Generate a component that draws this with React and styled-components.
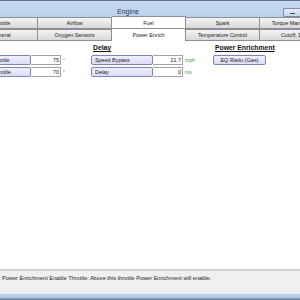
import React from 'react'
import styled, { createGlobalStyle } from 'styled-components'

const Global = createGlobalStyle`
  html, body { margin: 0; padding: 0; }
  body {
    width: 300px;
    height: 300px;
    overflow: hidden;
    font-family: "Liberation Sans", Arial, sans-serif;
    background: #ffffff;
  }
`;

const Window = styled.div`
  width: 300px;
  height: 300px;
  display: flex;
  flex-direction: column;
  overflow: hidden;
  background: #ffffff;
`;

const TitleBar = styled.div`
  height: 16px;
  flex: none;
  display: flex;
  align-items: center;
  border-top: 1px solid #5d7391;
  background: linear-gradient(#c9dcf1, #b9d1ea);
  padding-left: 117px;
`;

const Title = styled.span`
  font-size: 7px;
  color: #1e395b;
  margin-top: 4px;
`;

const MinButton = styled.div`
  margin-left: auto;
  margin-top: 6px;
  width: 16px;
  height: 7px;
  border: 1px solid #7d8fa8;
  border-right: none;
  border-radius: 2px 0 0 2px;
  background: linear-gradient(#e6eef8, #c5d6ea);
  display: flex;
  align-items: center;
  justify-content: center;
  &::after {
    content: '';
    width: 5px;
    height: 1px;
    background: #3a4a60;
    margin-top: 2px;
  }
`;

const TabArea = styled.div`
  flex: none;
  background: #b9d1ea;
  display: flex;
  flex-direction: column;
`;

const TabRow = styled.div`
  display: flex;
  margin-left: -36px;
  height: 12px;
`;

const Tab = styled.div`
  width: 74px;
  flex: none;
  box-sizing: border-box;
  display: flex;
  align-items: center;
  justify-content: center;
  font-size: 5.4px;
  color: #222;
  white-space: nowrap;
  overflow: hidden;
  border: 1px solid #8c9096;
  border-left-width: ${p => (p.$first ? 1 : 0)}px;
  border-bottom: ${p => (p.$active ? 'none' : '1px solid #8c9096')};
  background: ${p => (p.$active ? '#ffffff' : 'linear-gradient(#f4f4f4, #e6e6e6 50%, #d9d9d9)')};
  ${p => p.$active && 'margin-top: -1px; height: 13px; position: relative; z-index: 1;'}
`;

const Content = styled.div`
  flex: 1;
  background: #ffffff;
  display: flex;
  flex-direction: column;
`;

const Columns = styled.div`
  display: flex;
  margin-left: -31px;
  padding-top: 2px;
`;

const Column = styled.div`
  width: 122px;
  flex: none;
  display: flex;
  flex-direction: column;
  gap: 2px;
`;

const Header = styled.div`
  height: 10px;
  font-size: 6.8px;
  font-weight: bold;
  color: #111;
  text-decoration: underline;
  padding-left: 2px;
  line-height: 10px;
`;

const FieldRow = styled.div`
  display: flex;
  align-items: center;
  height: 10px;
`;

const Label = styled.div`
  width: 62px;
  height: 10px;
  box-sizing: border-box;
  border: 1px solid #7d84b8;
  border-radius: 2px;
  background: linear-gradient(#f0f0fc, #dcdcf6);
  font-size: 5.4px;
  color: #1a1a1a;
  padding-left: 3px;
  line-height: 8px;
  white-space: nowrap;
  overflow: hidden;
`;

const Value = styled.div`
  width: 30px;
  height: 10px;
  box-sizing: border-box;
  border: 1px solid #a3a3a3;
  border-left: none;
  background: #fff;
  font-size: 5.4px;
  color: #1a1a1a;
  text-align: right;
  padding-right: 1px;
  line-height: 8px;
`;

const Unit = styled.span`
  font-size: 5px;
  margin-left: 2px;
  color: ${p => p.$color || '#777'};
`;

const Button = styled.div`
  width: 53px;
  height: 10px;
  box-sizing: border-box;
  border: 1px solid #7d84b8;
  border-radius: 2px;
  background: linear-gradient(#f2f2fd, #dcdcf6);
  font-size: 5.6px;
  color: #1a1a1a;
  text-align: center;
  line-height: 8px;
`;

const Spacer = styled.div`
  flex: 1;
`;

const StatusBar = styled.div`
  height: 25px;
  flex: none;
  border-top: 2px solid #cfcfcf;
  background: #f0f0f0;
  font-size: 5.6px;
  color: #222;
  padding: 4px 0 0 2px;
  box-sizing: border-box;
  white-space: nowrap;
`;

const BottomBorder = styled.div`
  height: 6px;
  flex: none;
  background: linear-gradient(#b9d1ea 0, #b9d1ea 50%, #5c7390 100%);
`;

const rows1 = ['Throttle', 'Airflow', 'Fuel', 'Spark', 'Torque Management']
const rows2 = ['General', 'Oxygen Sensors', 'Power Enrich', 'Temperature Control', 'Cutoff, Decel']

export default function App() {
  return (
    <Window>
      <Global />
      <TitleBar>
        <Title>Engine</Title>
        <MinButton />
      </TitleBar>
      <TabArea>
        <TabRow>
          {rows1.map((t, i) => (
            <Tab key={t} $first={i === 0} $active={t === 'Fuel'}>{t}</Tab>
          ))}
        </TabRow>
        <TabRow>
          {rows2.map((t, i) => (
            <Tab key={t} $first={i === 0} $active={t === 'Power Enrich'}>{t}</Tab>
          ))}
        </TabRow>
      </TabArea>
      <Content>
        <Columns>
          <Column>
            <Header>Throttle</Header>
            <FieldRow>
              <Label>Enable Throttle</Label>
              <Value>75</Value>
              <Unit>°</Unit>
            </FieldRow>
            <FieldRow>
              <Label>Disable Throttle</Label>
              <Value>70</Value>
              <Unit>°</Unit>
            </FieldRow>
          </Column>
          <Column>
            <Header>Delay</Header>
            <FieldRow>
              <Label>Speed Bypass</Label>
              <Value>21.7</Value>
              <Unit $color="#2e9a2e">mph</Unit>
            </FieldRow>
            <FieldRow>
              <Label>Delay</Label>
              <Value>0</Value>
              <Unit $color="#2e9a2e">ms</Unit>
            </FieldRow>
          </Column>
          <Column>
            <Header>Power Enrichment</Header>
            <FieldRow>
              <Button>EQ Ratio (Gas)</Button>
            </FieldRow>
          </Column>
        </Columns>
        <Spacer />
      </Content>
      <StatusBar>Power Enrichment Enable Throttle: Above this throttle Power Enrichment will enable.</StatusBar>
      <BottomBorder />
    </Window>
  )
}
